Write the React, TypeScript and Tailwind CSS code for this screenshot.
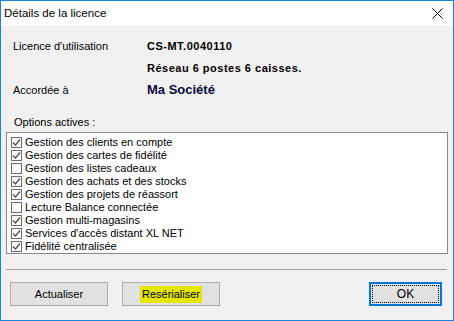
import React from 'react'

const options: { label: string; checked: boolean }[] = [
  { label: 'Gestion des clients en compte', checked: true },
  { label: 'Gestion des cartes de fidélité', checked: true },
  { label: 'Gestion des listes cadeaux', checked: false },
  { label: 'Gestion des achats et des stocks', checked: true },
  { label: 'Gestion des projets de réassort', checked: true },
  { label: 'Lecture Balance connectée', checked: false },
  { label: 'Gestion multi-magasins', checked: true },
  { label: "Services d'accès distant XL NET", checked: true },
  { label: 'Fidélité centralisée', checked: true },
]

function CheckBox({ checked }: { checked: boolean }) {
  return (
    <span className="w-[11px] h-[11px] border border-[#6d6d6d] bg-white flex items-center justify-center flex-shrink-0">
      {checked && (
        <svg width="9" height="9" viewBox="0 0 9 9">
          <path d="M1 4.5 L3.5 7 L8 1.5" fill="none" stroke="#4a4a4a" strokeWidth="1.2" />
        </svg>
      )}
    </span>
  )
}

export default function App() {
  return (
    <div
      className="w-[454px] h-[321px] border border-[#1883d7] bg-[#f0f0f0] flex flex-col text-black text-[11px]"
      style={{ fontFamily: '"Liberation Sans", Arial, sans-serif' }}
    >
      {/* Title bar */}
      <div className="h-[25px] bg-white flex items-center justify-between pl-[3px] pr-[10px] flex-shrink-0">
        <span className="text-[11.5px] leading-none">Détails de la licence</span>
        <svg width="11" height="11" viewBox="0 0 11 11">
          <path d="M0.5 0.5 L10.5 10.5 M10.5 0.5 L0.5 10.5" stroke="#000" strokeWidth="1" />
        </svg>
      </div>

      {/* Body */}
      <div className="flex-1 flex flex-col px-[5px]">
        <div className="pl-[7px] mt-[12px] grid grid-cols-[134px_1fr] gap-y-[6px] leading-[16px]">
          <span>Licence d'utilisation</span>
          <span className="font-bold text-[11px] tracking-[0.5px]">CS-MT.0040110</span>
          <span></span>
          <span className="font-bold text-[11px] tracking-[0.5px]">Réseau 6 postes 6 caisses.</span>
          <span>Accordée à</span>
          <span className="font-bold text-[13px] text-[#0a0a3a]">Ma Société</span>
        </div>

        <div className="pl-[8px] mt-[16px] leading-[16px]">Options actives :</div>

        <div className="mt-[2px] h-[122px] border border-[#828790] bg-white pt-[3px] pl-[4px]">
          {options.map((opt) => (
            <div key={opt.label} className="h-[13px] flex items-center gap-[3px] leading-[13px]">
              <CheckBox checked={opt.checked} />
              <span>{opt.label}</span>
            </div>
          ))}
        </div>

        <div className="mt-[15px] mr-[1px] h-px bg-[#a0a0a0]" />

        {/* Buttons */}
        <div className="mt-[12px] flex items-center pl-[4px] pr-[6px]">
          <button className="w-[98px] h-[24px] bg-[#e1e1e1] border border-[#adadad] text-[11px]">
            Actualiser
          </button>
          <button className="ml-[14px] w-[98px] h-[24px] bg-[#e1e1e1] border border-[#adadad] text-[11px] flex items-center justify-center">
            <span className="bg-[#e6e600] px-[2px] py-[3px] leading-none">Resérialiser</span>
          </button>
          <button className="ml-auto w-[73px] h-[24px] bg-[#e1e1e1] border-2 border-[#0078d7] p-px">
            <span className="w-full h-full flex items-center justify-center border border-dotted border-black text-[12px]">
              OK
            </span>
          </button>
        </div>
      </div>
    </div>
  )
}
